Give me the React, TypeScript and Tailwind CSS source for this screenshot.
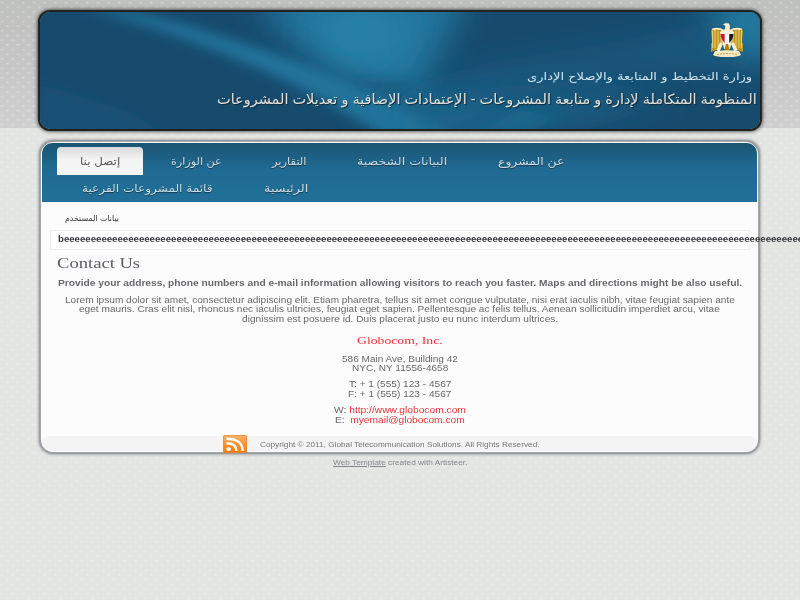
import { useLayoutEffect, useRef, type ReactNode } from "react";

// Stretches one line of text horizontally so it fills the width of its box.
function Fit({ className = "", rtl = false, children }: { className?: string; rtl?: boolean; children: ReactNode }) {
  const box = useRef<HTMLDivElement>(null);
  const line = useRef<HTMLSpanElement>(null);
  useLayoutEffect(() => {
    if (!box.current || !line.current) return;
    const natural = line.current.offsetWidth;
    if (natural > 0) line.current.style.transform = `scaleX(${box.current.clientWidth / natural})`;
  }, []);
  return (
    <div ref={box} className={`flex shrink-0 items-center justify-start whitespace-nowrap ${className}`}>
      <span ref={line} dir={rtl ? "rtl" : "ltr"} className="inline-block shrink-0 origin-left">
        {children}
      </span>
    </div>
  );
}

function Dots() {
  return (
    <svg className="pointer-events-none absolute inset-0 h-full w-full" aria-hidden="true">
      <defs>
        <pattern id="dots" width="10.67" height="9.38" patternUnits="userSpaceOnUse">
          <rect x="0.5" y="2" width="3" height="1.2" rx="0.6" fill="#fff" fillOpacity="0.36" />
          <rect x="5.8" y="6.7" width="3" height="1.2" rx="0.6" fill="#fff" fillOpacity="0.36" />
        </pattern>
      </defs>
      <rect width="100%" height="100%" fill="url(#dots)" />
    </svg>
  );
}

function HeaderArt() {
  return (
    <svg className="absolute inset-0 h-full w-full" viewBox="0 0 720 117" preserveAspectRatio="none" aria-hidden="true">
      <defs>
        <filter id="soft" x="-30%" y="-60%" width="160%" height="220%"><feGaussianBlur stdDeviation="6" /></filter>
        <filter id="wide" x="-40%" y="-80%" width="180%" height="260%"><feGaussianBlur stdDeviation="16" /></filter>
      </defs>
      <rect width="720" height="117" fill="#174b6e" />
      <path d="M215-25H430L405 30L370 95L310 62L240 20Z" fill="#23769e" filter="url(#wide)" />
      <ellipse cx="320" cy="22" rx="48" ry="38" fill="#2681a8" fillOpacity="0.8" filter="url(#wide)" />
      <path d="M40-6C110 -4 250 44 350 86L420 130H350C300 92 190 34 40-6Z" fill="#20739b" filter="url(#soft)" />
      <path d="M310 68L370 70L400 88L350 86Z" fill="#1b5b80" fillOpacity="0.75" filter="url(#soft)" />
      <path d="M370 85L450 60L560 42L720 10V46L590 54L460 78L390 117H350Z" fill="#1f6c94" fillOpacity="0.6" filter="url(#wide)" />
      <path d="M655-20H740V55L700 40Z" fill="#2580a7" fillOpacity="0.85" filter="url(#wide)" />
      <path d="M0 72L90 100L130 125H0Z" fill="#1b5d84" fillOpacity="0.35" filter="url(#soft)" />
      <path d="M385 92L540 80L640 84L450 130H360Z" fill="#206f97" fillOpacity="0.65" filter="url(#wide)" />
      <path d="M430 125L480 98L520 105L480 125Z" fill="#23759c" fillOpacity="0.35" filter="url(#soft)" />
    </svg>
  );
}

function Eagle() {
  return (
    <svg className="block h-[36px] w-[34px]" viewBox="0 0 34 36" aria-hidden="true">
      <path d="M1 8L4 7 12 9 14 21 9 27 1 30V22L2 20Z" fill="#c3951b" />
      <path d="M33 8L30 7 22 9 20 21 25 27 33 30V22L32 20Z" fill="#c3951b" />
      <path d="M2.5 9V26M5 8V26M8 9V25M11 10V23M31.5 9V26M29 8V26M26 9V25M23 10V23" stroke="#ecd58a" strokeWidth="0.9" />
      <path d="M13 2.5L15 1.2H18.5C20.5 3 20 5 19.5 7L24 10 22 18 20 27H14L12 18 10 10 15 7 15.5 4Z" fill="#f8f0d2" />
      <path d="M2 7.5Q9 5.5 14 9M32 7.5Q25 5.5 20 9" fill="none" stroke="#fbeab5" strokeWidth="1.8" />
      <path d="M10.5 12H14.8V21Q11 18 10.5 12" fill="#cc1937" />
      <path d="M14.8 12H19.2V22H14.8Z" fill="#fff" />
      <path d="M19.2 12H23.5Q23 18 19.2 21Z" fill="#171a22" />
      <path d="M14 29L16 22H18L20 29Z" fill="#a98012" />
      <path d="M11.5 21L8 29M22.5 21L26 29" stroke="#f9efcc" strokeWidth="3.4" />
      <path d="M5 29Q17 27.5 29 29L31 33Q26 35.5 17 35Q8 35.5 3 33Z" fill="#f6eac2" />
      <path d="M7 32.5Q17 30.5 27 32.5" fill="none" stroke="#c5a34a" strokeWidth="1" strokeDasharray="2 1" />
    </svg>
  );
}

function Rss() {
  return (
    <svg className="block h-[18px] w-[24px] shrink-0" viewBox="0 0 24 18" preserveAspectRatio="none" aria-hidden="true">
      <defs><linearGradient id="rss" x2="0" y2="1"><stop stopColor="#fab36d" /><stop offset=".45" stopColor="#fb9738" /><stop offset="1" stopColor="#f57900" /></linearGradient></defs>
      <rect x=".4" y=".4" width="23.2" height="17.2" rx="1.5" fill="url(#rss)" stroke="#ec7c16" strokeWidth=".8" />
      <ellipse cx="5.6" cy="14.1" rx="2.4" ry="1.9" fill="#fff" />
      <path d="M3.5 8.3C10 8.3 13.4 11 13.4 16" fill="none" stroke="#fff" strokeWidth="2.4" />
      <path d="M3.5 3.8C14 3.8 19.7 8 19.7 16" fill="none" stroke="#fff" strokeWidth="2.4" />
    </svg>
  );
}

const nav = "h-[28px] text-[10.5px] text-[#cfdde5] [text-shadow:0_1px_1px_#17384b]";

export default function App() {
  return (
    <div className="relative h-[600px] w-[800px] overflow-hidden bg-[#e2e5e2] font-['Liberation_Sans','DejaVu_Sans',sans-serif] text-[#68686c]">
      <div className="absolute inset-x-0 top-0 h-[128px] bg-linear-to-b from-[#bfc1be] via-[#c6c6c6] to-[#cfd0cf]" />
      <Dots />
      <div className="relative flex flex-col items-center pt-[12px]">
        <header className="relative ml-[-1px] h-[117px] w-[720px] overflow-visible rounded-[10px] shadow-[0_0_0_2px_#202322,0_0_4px_2px_#222]">
          <div className="absolute inset-0 overflow-hidden rounded-[10px]"><HeaderArt /></div>
          <div className="relative flex flex-col items-end pt-[10px]">
            <div className="mr-[16px]"><Eagle /></div>
            <Fit rtl className="mt-[10px] mr-[8px] h-[18px] w-[225px] font-['DejaVu_Sans',sans-serif] text-[10.5px] text-[#d1e4ee]">وزارة التخطيط و المتابعة والإصلاح الإدارى</Fit>
            <Fit rtl className="mt-[2px] mr-[3px] h-[22px] w-[540px] font-['Liberation_Sans','DejaVu_Sans',sans-serif] text-[14px] text-[#e4e1da] [text-shadow:1px_1px_1px_#102b3c]">المنظومة المتكاملة لإدارة و متابعة المشروعات - الإعتمادات الإضافية و تعديلات المشروعات</Fit>
          </div>
        </header>

        <main className="mt-[13px] ml-[-1px] flex h-[310px] w-[717px] flex-col rounded-[12px] border-[1px] border-white bg-[#fcfcfc] shadow-[0_0_0_1px_#a1a2a6,0_0_3px_2px_#77777d]">
          <nav className="h-[59px] shrink-0 rounded-t-[10px] bg-linear-to-b from-[#1b5473] via-[#206b93] via-45% to-[#216f98] pt-[4px] font-['DejaVu_Sans',sans-serif]">
            <div className="flex h-[28px] items-center pl-[15px]">
              <div className="flex h-[28px] w-[86px] items-center justify-center rounded-t-[4px] bg-linear-to-b from-[#d9d9da] via-[#f4f4f4] via-45% to-[#f5f5f5]">
                <Fit rtl className="h-[28px] w-[40px] pt-[2px] text-[11px] text-[#55555a]">إتصل بنا</Fit>
              </div>
              <Fit rtl className={`ml-[28px] w-[51px] pt-[2px] ${nav}`}>عن الوزارة</Fit>
              <Fit rtl className={`ml-[50px] w-[35px] pt-[2px] ${nav}`}>التقارير</Fit>
              <Fit rtl className={`ml-[50px] w-[90px] pt-[2px] ${nav}`}>البيانات الشخصية</Fit>
              <Fit rtl className={`ml-[51px] w-[66px] pt-[2px] ${nav}`}>عن المشروع</Fit>
            </div>
            <div className="flex h-[27px] items-center pl-[40px]">
              <Fit rtl className={`w-[131px] pt-[1px] ${nav}`}>قائمة المشروعات الفرعية</Fit>
              <Fit rtl className={`ml-[51px] w-[44px] pt-[1px] ${nav}`}>الرئيسية</Fit>
            </div>
          </nav>
          <Fit rtl className="mt-[9px] ml-[23px] h-[16px] w-[54px] font-['DejaVu_Sans',sans-serif] text-[8px] text-[#333]">بيانات المستخدم</Fit>
          <div className="mt-[3px] ml-[8px] flex h-[20px] w-[700px] shrink-0 items-center border border-[#eeeeee] bg-white pl-[7px]">
            <Fit className="h-[16px] w-[777px] text-[9px] font-bold text-[#37373c]">{"b" + "e".repeat(144)}</Fit>
          </div>
          <Fit className="mt-[3px] ml-[15px] h-[20px] w-[83px] font-['Liberation_Serif',serif] text-[15px] text-[#5c5c66]">Contact Us</Fit>
          <section className="flex shrink-0 flex-col items-center text-[9px] leading-[9px]">
            <Fit className="mt-[6px] h-[9px] w-[684px] font-bold">Provide your address, phone numbers and e-mail information allowing visitors to reach you faster. Maps and directions might be also useful.</Fit>
            <Fit className="mt-[8px] h-[9px] w-[670px]">Lorem ipsum dolor sit amet, consectetur adipiscing elit. Etiam pharetra, tellus sit amet congue vulputate, nisi erat iaculis nibh, vitae feugiat sapien ante</Fit>
            <Fit className="h-[9px] w-[641px]">eget mauris. Cras elit nisl, rhoncus nec iaculis ultricies, feugiat eget sapien. Pellentesque ac felis tellus. Aenean sollicitudin imperdiet arcu, vitae</Fit>
            <Fit className="h-[10px] w-[316px]">dignissim est posuere id. Duis placerat justo eu nunc interdum ultrices.</Fit>
            <Fit className="mt-[9px] h-[14px] w-[86px] font-['Liberation_Serif',serif] text-[11px] text-[#ee3338]">Globocom, Inc.</Fit>
            <Fit className="mt-[8px] h-[9px] w-[116px]">586 Main Ave, Building 42</Fit>
            <Fit className="h-[9px] w-[96px]">NYC, NY 11556-4658</Fit>
            <Fit className="mt-[7px] h-[9px] w-[102px]">T: + 1 (555) 123 - 4567</Fit>
            <Fit className="mt-[1px] h-[9px] w-[103px]">F: + 1 (555) 123 - 4567</Fit>
            <Fit className="mt-[7px] h-[9px] w-[132px]">W: <span className="text-[#ee3338]">http://www.globocom.com</span></Fit>
            <Fit className="mt-[1px] h-[9px] w-[130px]">E: &nbsp;<span className="text-[#ee3338]">myemail@globocom.com</span></Fit>
          </section>
          <footer className="mt-auto flex h-[15px] shrink-0 items-center rounded-b-[10px] rounded-t-[8px] bg-[#f4f4f4] pl-[181px]">
            <Rss />
            <Fit className="ml-[13px] h-[15px] w-[280px] pt-[2px] text-[7.5px] text-[#77777a]">Copyright © 2011, Global Telecommunication Solutions. All Rights Reserved.</Fit>
          </footer>
        </main>
        <Fit className="mt-[6px] h-[10px] w-[134px] text-[7px] text-[#85868b]"><span className="underline">Web Template</span> created with Artisteer.</Fit>
      </div>
    </div>
  );
}
